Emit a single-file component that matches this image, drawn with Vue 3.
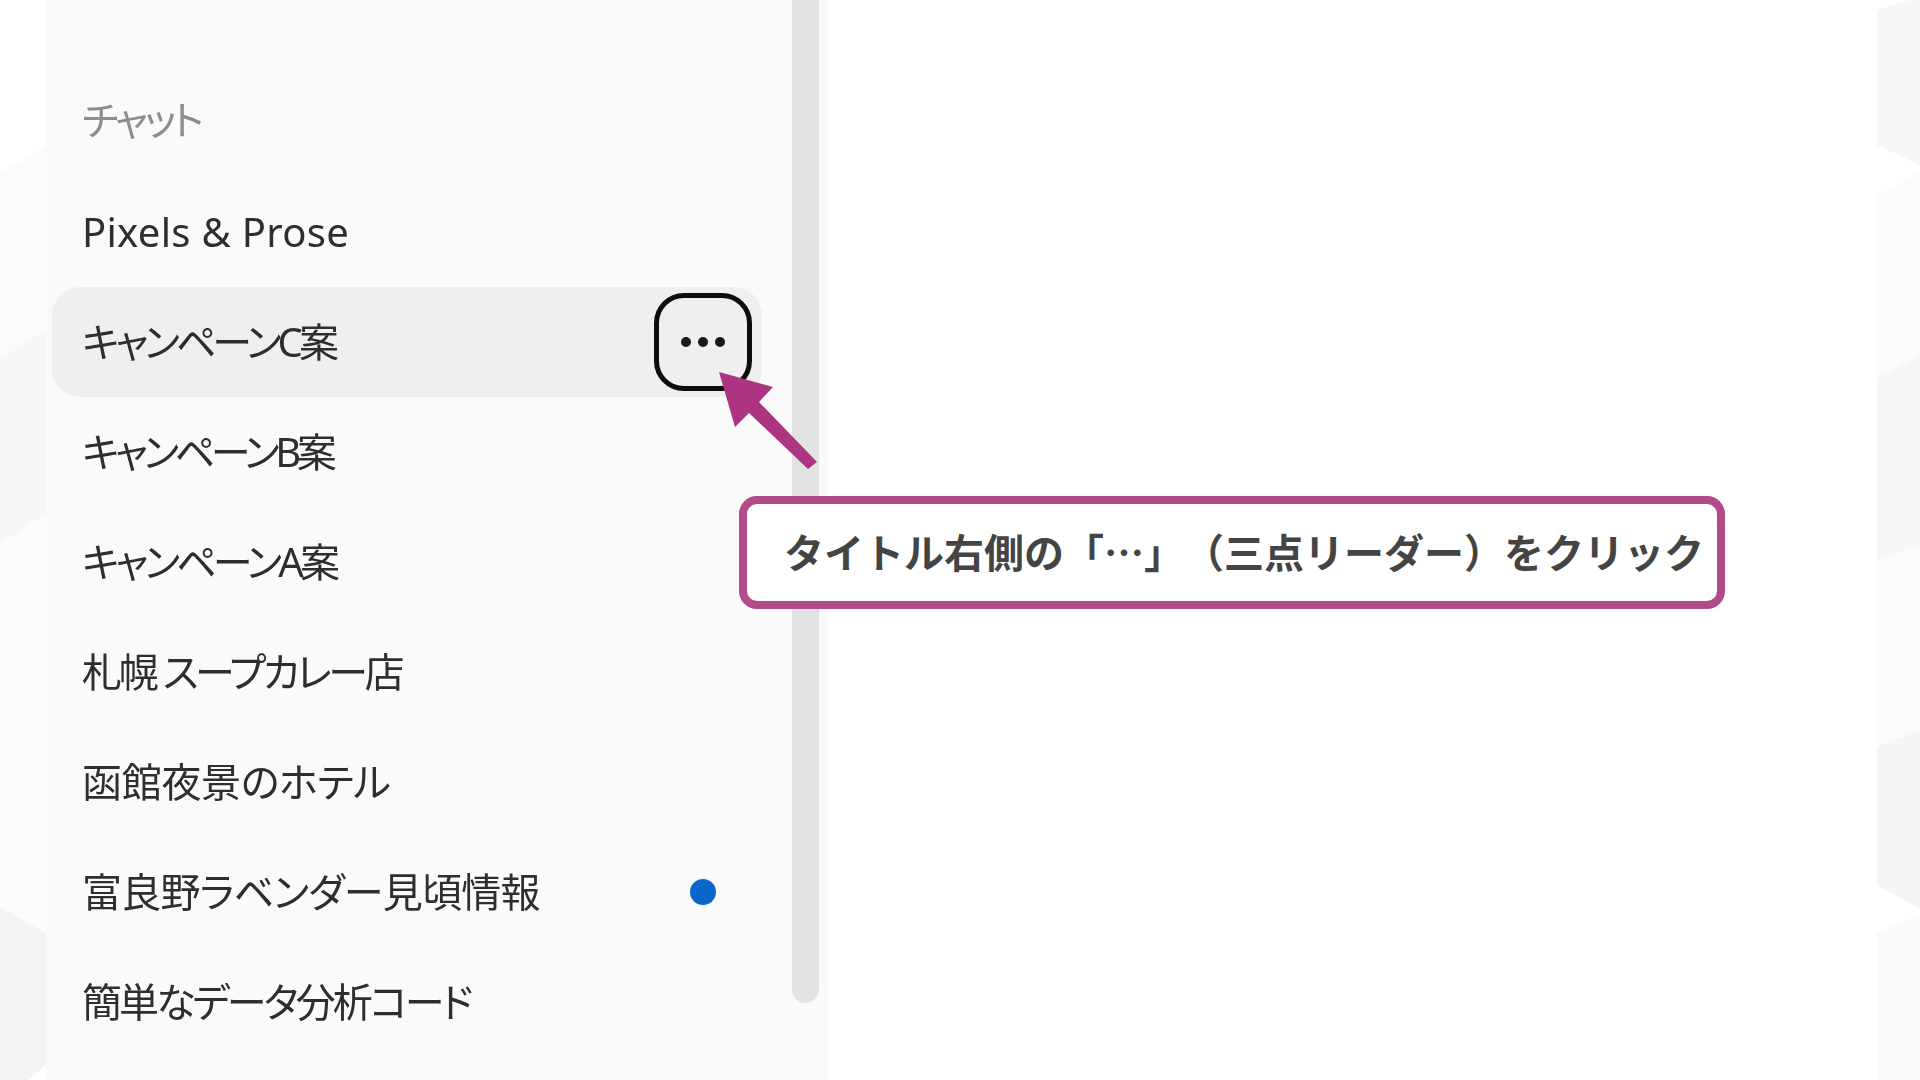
<script setup>
const chats = [
  { title: 'Pixels & Prose', spacing: 0.3 },
  { title: 'キャンペーンC案', spacing: -3.95, active: true },
  { title: 'キャンペーンB案', spacing: -4.35 },
  { title: 'キャンペーンA案', spacing: -3.85 },
  { title: '札幌 スープカレー店', spacing: -3.25 },
  { title: '函館夜景のホテル', spacing: -0.3 },
  { title: '富良野ラベンダー見頃情報', spacing: -0.75, unread: true },
  { title: '簡単なデータ分析コード', spacing: -2.9 }
]
</script>

<template>
  <div class="stage">
    <svg class="strip strip-left" viewBox="0 0 46 1080" aria-hidden="true">
      <rect width="46" height="1080" fill="#ffffff" />
      <polygon points="0,173 46,147 46,330 0,358" fill="#fbfbfc" />
      <polygon points="0,358 46,330 46,513 0,544" fill="#f6f7f9" />
      <polygon points="0,544 46,513 46,702 0,723" fill="#fbfbfc" />
      <polygon points="0,723 46,702 46,933 0,907" fill="#fcfcfc" />
      <polygon points="0,907 46,933 46,1065 28,1080 0,1080" fill="#f3f4f6" />
    </svg>

    <aside class="panel">
      <div class="list">
        <h2 class="heading">チャット</h2>
        <div
          v-for="chat in chats"
          :key="chat.title"
          class="row"
          :class="{ active: chat.active }"
        >
          <span class="title" :style="{ letterSpacing: chat.spacing + 'px' }">{{ chat.title }}</span>
          <button v-if="chat.active" class="more" type="button" aria-label="その他">
            <i></i><i></i><i></i>
          </button>
          <span v-if="chat.unread" class="dot"></span>
        </div>
      </div>
      <div class="scrollbar"></div>
    </aside>

    <main class="content"></main>

    <svg class="strip strip-right" viewBox="0 0 43 1080" aria-hidden="true">
      <rect width="43" height="1080" fill="#ffffff" />
      <polygon points="0,10 33,0 43,0 43,165 0,145" fill="#f6f7f7" />
      <polygon points="0,196 43,172 43,355 0,379" fill="#fbfbfb" />
      <polygon points="0,379 43,355 43,544 0,561" fill="#f5f6f8" />
      <polygon points="0,561 43,544 43,730 0,747" fill="#fbfbfb" />
      <polygon points="0,747 43,730 43,909 0,885" fill="#f5f5f6" />
      <polygon points="0,933 43,915 43,1080 0,1080" fill="#fafafa" />
    </svg>

    <svg class="arrow" viewBox="0 0 120 120" aria-hidden="true">
      <polygon
        points="9,2 63,17 49,32 107,92 98,99 39,43 25,57"
        fill="#ad3480"
      />
    </svg>

    <div class="callout">タイトル右側の「…」（三点リーダー）をクリック</div>
  </div>
</template>

<style>
html,
body {
  margin: 0;
  background: #ffffff;
}
</style>

<style scoped>
.stage {
  position: relative;
  display: flex;
  width: 1920px;
  height: 1080px;
  overflow: hidden;
  background: #ffffff;
  font-family: "Noto Sans", "Noto Sans CJK JP", sans-serif;
}

.strip {
  display: block;
  flex: none;
  height: 1080px;
}

.strip-left {
  width: 46px;
}

.strip-right {
  width: 43px;
}

.panel {
  display: flex;
  flex: none;
  width: 782px;
  height: 1080px;
  padding-right: 8px;
  box-sizing: border-box;
  background: #fafafa;
}

.list {
  flex: none;
  width: 746px;
  padding-top: 96px;
  box-sizing: border-box;
}

.heading {
  height: 48px;
  margin: 0 0 33px;
  padding-left: 36px;
  font-size: 40px;
  font-weight: 400;
  line-height: 48px;
  letter-spacing: -3.1px;
  color: #8d8d8d;
  font-feature-settings: "palt";
  filter: blur(0.5px);
}

.row {
  display: flex;
  align-items: center;
  justify-content: space-between;
  box-sizing: border-box;
  width: 710px;
  height: 110px;
  margin-left: 6px;
  padding: 0 46px 0 30px;
  border-radius: 28px;
}

.row.active {
  padding-right: 10px;
  background: #efefef;
}

.title {
  font-size: 40px;
  line-height: 48px;
  color: #2e2e2e;
  white-space: nowrap;
  font-feature-settings: "palt";
  filter: blur(0.5px);
}

.more {
  display: flex;
  flex: none;
  align-items: center;
  justify-content: center;
  gap: 7px;
  box-sizing: border-box;
  width: 98px;
  height: 98px;
  padding: 0;
  border: 5px solid #0d0d0d;
  border-radius: 30px;
  background: transparent;
  filter: blur(0.5px);
}

.more i {
  display: block;
  width: 10px;
  height: 10px;
  border-radius: 50%;
  background: #1a1a1a;
}

.dot {
  flex: none;
  width: 26px;
  height: 26px;
  border-radius: 50%;
  background: #0a66c8;
}

.scrollbar {
  flex: none;
  width: 27px;
  height: 1003px;
  border-radius: 0 0 14px 14px;
  background: #e3e3e3;
}

.content {
  flex: none;
  width: 1049px;
  height: 1080px;
  background: #ffffff;
}

.arrow {
  position: absolute;
  top: 370px;
  left: 710px;
  width: 120px;
  height: 120px;
}

.callout {
  position: absolute;
  top: 496px;
  left: 739px;
  display: flex;
  align-items: center;
  box-sizing: border-box;
  width: 986px;
  height: 113px;
  padding: 0 0 4px 37px;
  border: 8px solid #b24c88;
  border-radius: 18px;
  background: #ffffff;
  font-family: "Noto Sans CJK JP", sans-serif;
  font-size: 40px;
  font-weight: 700;
  line-height: 1;
  color: #444444;
  white-space: nowrap;
  text-spacing-trim: space-all;
}
</style>
